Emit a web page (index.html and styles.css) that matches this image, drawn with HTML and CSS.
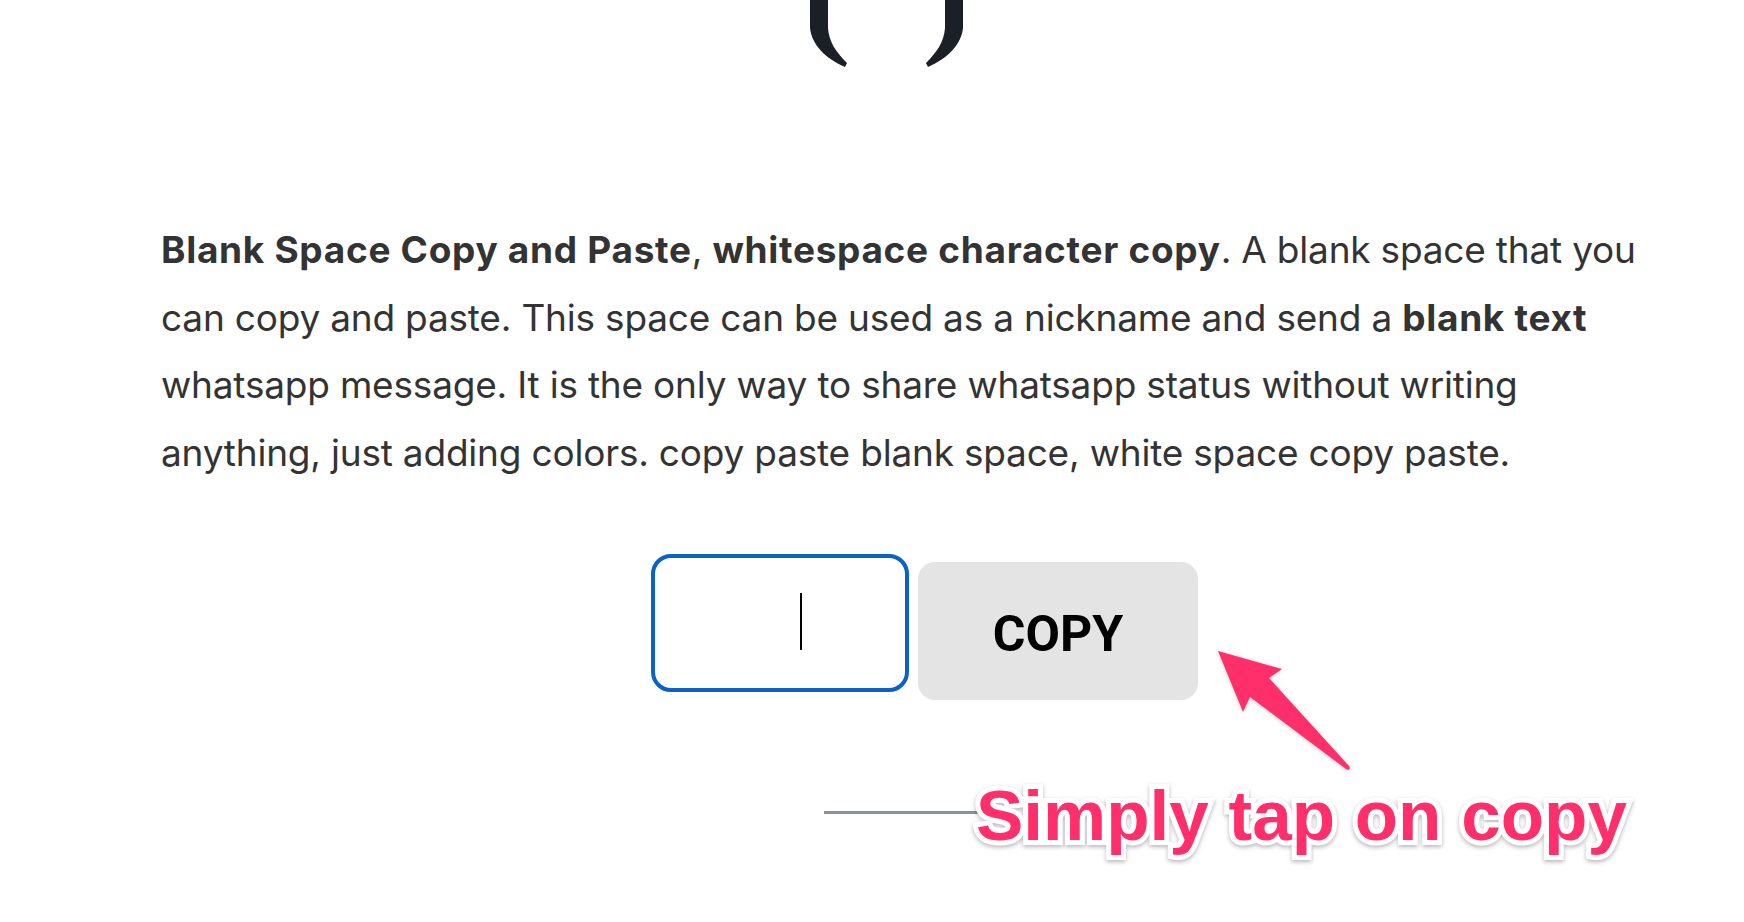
FILE: index.html
```html
<!DOCTYPE html>
<html lang="en">
<head>
<meta charset="utf-8">
<title>Blank Space Copy and Paste</title>
<link rel="stylesheet" href="styles.css">
</head>
<body>
  <div class="logo">
    <svg class="logo-mark" width="173" height="70" viewBox="0 0 173 70" aria-hidden="true">
      <path d="M10 0 L10 28 C12 45 25 58 45 67 L47 63 C36 52 29 42 28 28 L28 0 Z" fill="#1b2026"/>
      <path d="M163 0 L163 28 C161 45 148 58 128 67 L126 63 C137 52 144 42 145 28 L145 0 Z" fill="#1b2026"/>
    </svg>
  </div>

  <p class="intro"><strong>Blank Space Copy and Paste</strong>, <strong>whitespace character copy</strong>. A blank space that you can copy and paste. This space can be used as a nickname and send a <strong>blank text</strong> whatsapp message. It is the only way to share whatsapp status without writing anything, just adding colors. copy paste blank space, white space copy paste.</p>

  <div class="copy-row">
    <div class="field"><span class="caret"></span></div>
    <button class="copy-btn" type="button">COPY</button>
  </div>

  <div class="hint">
    <span class="hint-rule"></span>
    <span class="hint-text">Simply tap on copy</span>
    <svg class="hint-arrow" width="145" height="130" viewBox="0 0 145 130" aria-hidden="true">
      <path d="M8 6 L72 24 L59 33 L139 121 C141 124 138 126 136 124 L40 52 L33 67 Z" fill="#ff2f6b"/>
    </svg>
  </div>
</body>
</html>
```

FILE: styles.css
```css
html, body {
  margin: 0;
  padding: 0;
  background: #ffffff;
}

body {
  font-family: "Inter", "Noto Sans", sans-serif;
  color: #333333;
  width: 1744px;
  height: 922px;
  overflow: hidden;
}

.logo {
  height: 70px;
  display: flex;
}

.logo-mark {
  display: block;
  margin-left: 800px;
}

.intro {
  margin: 146px 0 0 161px;
  width: 1510px;
  font-size: 37px;
  line-height: 67.5px;
  letter-spacing: -0.2px;
}

.intro strong {
  font-weight: 700;
  letter-spacing: 0.7px;
}

.copy-row {
  display: flex;
  align-items: flex-start;
  gap: 9px;
  margin: 68px 0 0 651px;
}

.field {
  box-sizing: border-box;
  width: 258px;
  height: 138px;
  border: 4px solid #0a62c8;
  border-radius: 20px;
  background: #ffffff;
  display: flex;
  align-items: center;
  justify-content: center;
  padding-left: 42px;
}

.caret {
  display: block;
  width: 2px;
  height: 57px;
  margin-top: -4px;
  background: #000000;
}

.copy-btn {
  box-sizing: border-box;
  width: 280px;
  height: 138px;
  margin-top: 8px;
  border: none;
  border-radius: 17px;
  background: #e4e4e4;
  font-family: "Roboto", "Liberation Sans", sans-serif;
  font-weight: 700;
  font-size: 50px;
  color: #000000;
  padding: 6px 0 0;
}

.hint {
  position: relative;
  display: flex;
  align-items: center;
  margin: 76px 0 0 824px;
  height: 80px;
}

.hint-rule {
  display: block;
  width: 158px;
  height: 3px;
  margin-top: -8px;
  background: #8d9299;
}

.hint-text {
  font-family: "Liberation Sans", "Arial", sans-serif;
  font-weight: 700;
  font-size: 71px;
  line-height: 80px;
  color: #ff2f6b;
  -webkit-text-stroke: 10px #ffffff;
  paint-order: stroke fill;
  filter: drop-shadow(0 2px 2px rgba(0, 0, 0, 0.28));
  white-space: nowrap;
  margin-left: -6px;
}

.hint-arrow {
  position: absolute;
  left: 386px;
  top: -131px;
  filter: drop-shadow(0 1px 2px rgba(0, 0, 0, 0.2));
}
```
